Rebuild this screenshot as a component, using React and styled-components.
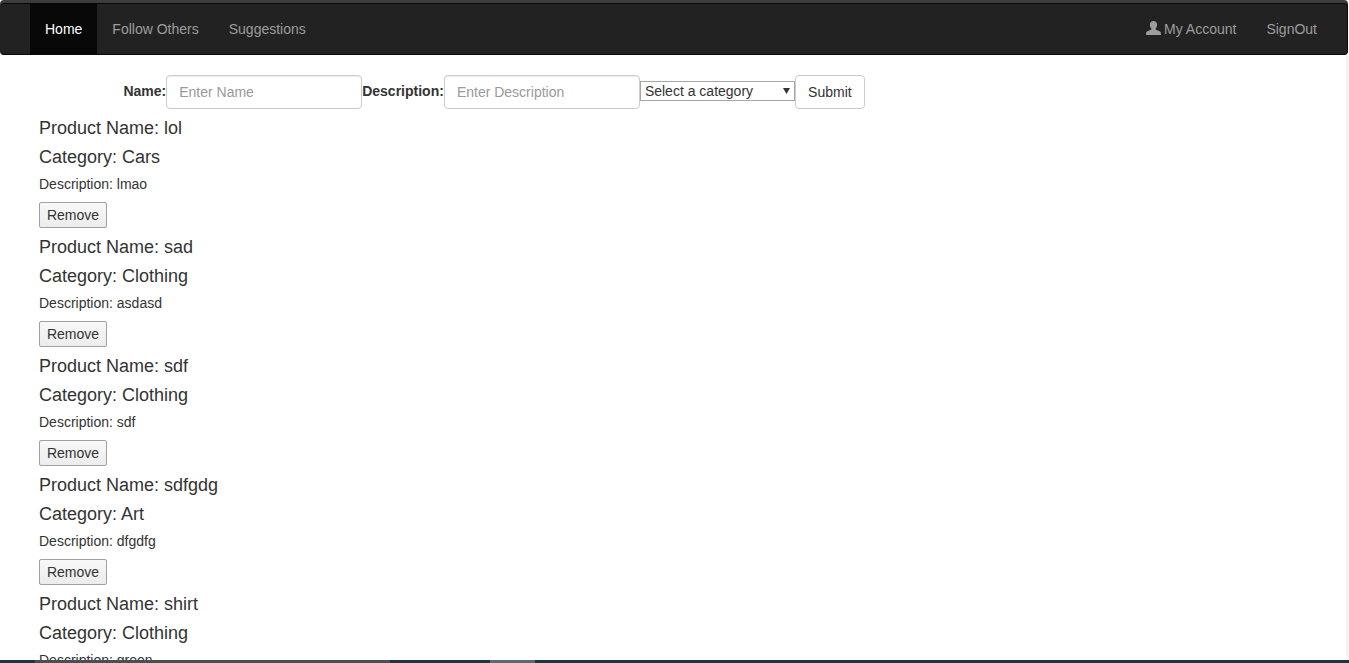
import styled, { createGlobalStyle } from 'styled-components';

const products = [
  { name: 'lol', category: 'Cars', description: 'lmao' },
  { name: 'sad', category: 'Clothing', description: 'asdasd' },
  { name: 'sdf', category: 'Clothing', description: 'sdf' },
  { name: 'sdfgdg', category: 'Art', description: 'dfgdfg' },
  { name: 'shirt', category: 'Clothing', description: 'green' },
];

const selectArrow =
  "data:image/svg+xml,%3Csvg xmlns='http://www.w3.org/2000/svg' width='7' height='6'%3E%3Cpath d='M0 0h7L3.500 6z' fill='%23333'/%3E%3C/svg%3E";

const GlobalStyle = createGlobalStyle`
  html, body {
    margin: 0;
    height: 663px;
    overflow: hidden;
    background: #fff;
  }
  * {
    box-sizing: border-box;
  }
  body {
    font-family: "Liberation Sans", Arial, sans-serif;
    font-size: 14px;
    line-height: 20px;
    color: #333;
  }
`;

const Navbar = styled.nav`
  display: flex;
  justify-content: space-between;
  height: 52px;
  margin: 3px 1px 0 0;
  padding: 0 15px 0 29px;
  background: #222;
  border: 1px solid #080808;
  border-left-color: #222;
  border-radius: 4px;
  box-shadow: 0 -3px 0 #3c3c3c;
`;

const NavGroup = styled.div`
  display: flex;
`;

const NavLink = styled.a`
  display: flex;
  align-items: center;
  gap: 3px;
  padding: 0 15px;
  height: 50px;
  color: ${({ $active }) => ($active ? '#fff' : '#9d9d9d')};
  background: ${({ $active }) => ($active ? '#080808' : 'transparent')};
  text-decoration: none;
  cursor: pointer;
`;

const UserIcon = styled.svg`
  width: 15px;
  height: 14px;
  margin-top: -3px;
  fill: #9d9d9d;
`;

const ProductForm = styled.form`
  display: flex;
  align-items: flex-start;
  margin: 20px 0 0;
  padding-left: 123.4px;
`;

const Label = styled.label`
  font-weight: 700;
  margin-top: 6px;
`;

const Input = styled.input`
  width: 196px;
  height: 34px;
  padding: 6px 12px;
  font: inherit;
  color: #555;
  background: #fff;
  border: 1px solid #ccc;
  border-radius: 4px;
  box-shadow: inset 0 1px 1px rgba(0, 0, 0, 0.075);

  &::placeholder {
    color: #999;
    opacity: 1;
  }
`;

const CategorySelect = styled.select`
  appearance: none;
  width: 155px;
  height: 20px;
  margin-top: 6px;
  padding: 0 4px;
  font: 14px "Liberation Sans", Arial, sans-serif;
  color: #333;
  background: #fff url("${selectArrow}") no-repeat right 4px center;
  border: 1px solid #a6a6a6;
  border-radius: 0;
`;

const SubmitButton = styled.button`
  width: 70px;
  height: 34px;
  padding: 6px 12px;
  font: inherit;
  color: #333;
  background: #fff;
  border: 1px solid #ccc;
  border-radius: 4px;
`;

const ProductList = styled.main`
  padding-left: 39px;
`;

const Product = styled.section`
  padding-top: 10px;
`;

const ProductTitle = styled.h4`
  margin: 0 0 9px;
  font-size: 18px;
  font-weight: 500;
  line-height: 19.8px;
`;

const ProductDescription = styled.h5`
  margin: 0 0 10px;
  font-size: 14px;
  font-weight: 500;
  line-height: 15.4px;
`;

const RemoveButton = styled.button`
  display: block;
  width: 68px;
  height: 26px;
  padding: 0;
  font: 14px "Liberation Sans", Arial, sans-serif;
  color: #333;
  background: linear-gradient(#f8f8f8, #ececec);
  border: 1px solid #a0a0a0;
  border-radius: 2px;
`;

const Taskbar = styled.div`
  position: fixed;
  left: 0;
  right: 0;
  bottom: 0;
  display: flex;
  height: 3px;
  background: #1f3440;
`;

const TaskbarItem = styled.div`
  width: ${({ $width }) => $width}px;
  background: ${({ $color }) => $color};
`;

const ScrollEdge = styled.div`
  position: fixed;
  top: 55px;
  right: 0;
  bottom: 3px;
  width: 3px;
  background: #f4f4f4;
`;

const App = () => (
  <>
    <GlobalStyle />
    <Navbar>
      <NavGroup>
        <NavLink $active>Home</NavLink>
        <NavLink>Follow Others</NavLink>
        <NavLink>Suggestions</NavLink>
      </NavGroup>
      <NavGroup>
        <NavLink>
          <UserIcon viewBox="0 0 15 14">
            <path d="M7.500 0C5.300 0 3.900 1.600 3.900 3.800c0 1.500.6 2.900 1.400 3.800.3.400.2.900-.3 1.200C3.300 9.700.7 10.100.2 11.600L0 14h15l-.2-2.400c-.5-1.500-3.100-1.900-4.800-2.800-.5-.3-.6-.8-.3-1.200.8-.9 1.400-2.300 1.400-3.800C11.100 1.600 9.700 0 7.500 0z" />
          </UserIcon>
          My Account
        </NavLink>
        <NavLink>SignOut</NavLink>
      </NavGroup>
    </Navbar>
    <ProductForm>
      <Label>Name:</Label>
      <Input placeholder="Enter Name" />
      <Label>Description:</Label>
      <Input placeholder="Enter Description" />
      <CategorySelect defaultValue="">
        <option value="">Select a category</option>
        <option>Cars</option>
        <option>Clothing</option>
        <option>Art</option>
      </CategorySelect>
      <SubmitButton type="button">Submit</SubmitButton>
    </ProductForm>
    <ProductList>
      {products.map(({ name, category, description }) => (
        <Product key={name}>
          <ProductTitle>Product Name: {name}</ProductTitle>
          <ProductTitle>Category: {category}</ProductTitle>
          <ProductDescription>Description: {description}</ProductDescription>
          <RemoveButton type="button">Remove</RemoveButton>
        </Product>
      ))}
    </ProductList>
    <ScrollEdge />
    <Taskbar>
      <TaskbarItem $width={35} $color="#1f3440" />
      <TaskbarItem $width={355} $color="#4a4f52" />
      <TaskbarItem $width={100} $color="#1f3440" />
      <TaskbarItem $width={45} $color="#5a6a73" />
    </Taskbar>
  </>
);

export default App;
